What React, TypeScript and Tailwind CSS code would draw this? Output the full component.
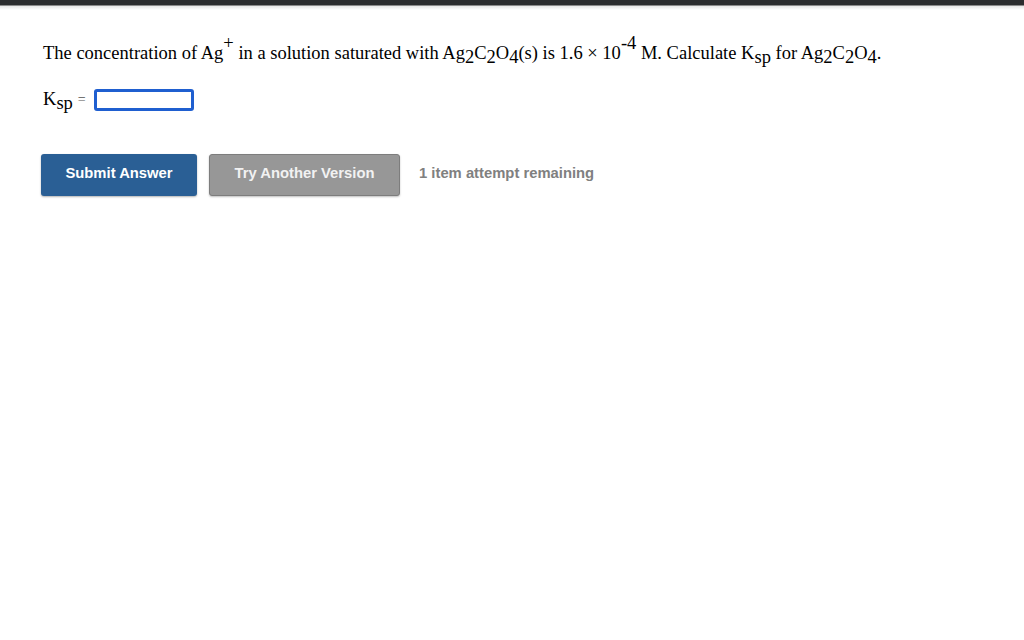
import React from 'react';

const Sub = ({ children }: { children: React.ReactNode }) => (
  <sub className="relative top-[4px] align-baseline text-[18.5px] leading-none">{children}</sub>
);

const Sup = ({ children }: { children: React.ReactNode }) => (
  <sup className="relative -top-[10px] align-baseline text-[18.5px] leading-none">{children}</sup>
);

export default function App() {
  return (
    <div className="min-h-[640px] w-full bg-white">
      {/* top chrome */}
      <div className="h-[5px] bg-[#2b2c2e]" />
      <div className="h-[1px] bg-[#8a8a8a]" />
      <div className="h-[4px] bg-gradient-to-b from-[#e6e6e6] to-white" />

      <div className="px-[43px] pt-[29px] font-['Liberation_Serif',serif] text-[18.5px] text-black">
        <p className="leading-[28px]">
          The concentration of Ag<Sup>+</Sup> in a solution saturated with Ag<Sub>2</Sub>C<Sub>2</Sub>O<Sub>4</Sub>(s) is 1.6 × 10<Sup>-4</Sup> M. Calculate K<Sub>sp</Sub> for Ag<Sub>2</Sub>C<Sub>2</Sub>O<Sub>4</Sub>.
        </p>

        <div className="mt-[19px] flex items-center">
          <span>
            K<Sub>sp</Sub>
          </span>
          <span className="ml-[5px] text-[14px] text-[#555]">=</span>
          <input
            className="ml-[8px] h-[22px] w-[100px] rounded-[3px] border-[3px] border-[#1f5fd0] bg-white outline-none"
            type="text"
          />
        </div>
      </div>

      <div className="mt-[40px] flex items-center px-[41px] font-['Liberation_Sans',Arial,sans-serif] text-[14.8px] font-bold">
        <button className="h-[42px] w-[156px] rounded-[3px] bg-[#2a5f95] pb-[3px] text-white shadow-[0_1px_2px_rgba(0,0,0,0.3)]">
          Submit Answer
        </button>
        <button className="ml-[12px] h-[42px] w-[191px] rounded-[3px] border border-[#7d7d7d] bg-[#979797] pb-[3px] text-[#f2f2f2] shadow-[0_1px_2px_rgba(0,0,0,0.25)]">
          Try Another Version
        </button>
        <span className="ml-[19px] pb-[3px] text-[#808080]">1 item attempt remaining</span>
      </div>
    </div>
  );
}
